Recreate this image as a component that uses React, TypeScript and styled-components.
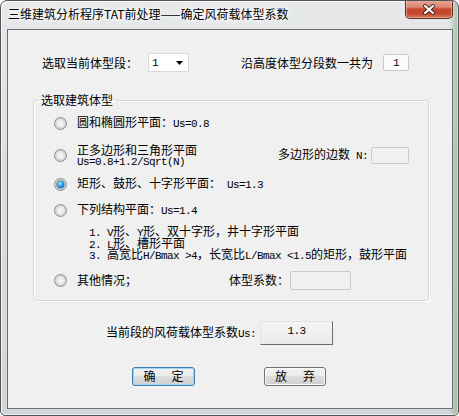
import React from "react";
import styled, { createGlobalStyle } from "styled-components";

const Global = createGlobalStyle`
  html, body { margin: 0; padding: 0; background: #ffffff; }
  body {
    width: 459px; height: 416px; overflow: hidden;
    font-family: "Noto Sans CJK SC", "Noto Sans", sans-serif;
    font-size: 12px; color: #000;
  }
`;

const Window = styled.div`
  width: 459px;
  height: 416px;
  box-sizing: border-box;
  display: flex;
  flex-direction: column;
  border: 1px solid #50565b;
  border-radius: 7px 7px 5px 5px;
  background:
    linear-gradient(to right, rgba(0,0,0,0) 0%, rgba(0,0,0,0) 98%, rgba(110,160,100,0.55) 100%),
    linear-gradient(to bottom, #e6e8ea 0%, #dcdfe1 40%, #d3d6d9 100%);
  box-shadow: inset 1px 1px 0 rgba(255,255,255,0.7), inset -1px -1px 0 rgba(255,255,255,0.5);
  overflow: hidden;
`;

const TitleBar = styled.div`
  height: 28px;
  display: flex;
  align-items: flex-start;
  justify-content: space-between;
  flex: none;
`;

const TitleText = styled.div`
  padding: 5px 0 0 7px;
  line-height: 16px;
  font-size: 12px;
  color: #000;
  text-shadow: 0 0 6px #fff, 0 0 10px #fff, 0 0 3px #fff;
  white-space: nowrap;
`;

const CloseButton = styled.div`
  width: 48px;
  height: 19px;
  margin-top: -1px;
  margin-right: 5px;
  box-sizing: border-box;
  border: 1px solid #5e2b26;
  border-top: none;
  border-radius: 0 0 5px 5px;
  background: linear-gradient(to bottom, #e9a99a 0%, #dc8571 40%, #c9472f 50%, #c3472e 75%, #d67a5b 100%);
  box-shadow: inset 0 0 0 1px rgba(255,220,210,0.45);
  display: flex;
  align-items: center;
  justify-content: center;
`;

const Client = styled.div`
  flex: 1;
  margin: 0 5px 6px 6px;
  border: 1px solid #6a6e72;
  background: #f0f0f0;
  display: flex;
  flex-direction: column;
  align-items: flex-start;
`;

const TopRow = styled.div`
  margin-top: 23px;
  padding-left: 34px;
  height: 19px;
  display: flex;
  align-items: center;
`;

const Label = styled.span<{ $ml?: number }>`
  line-height: 16px;
  white-space: pre;
  margin-left: ${(p) => p.$ml ?? 0}px;
`;

const Mono = styled.span<{ $ml?: number }>`
  font-family: "Liberation Mono", "DejaVu Sans Mono", monospace;
  font-size: 11px;
  letter-spacing: -0.6px;
  white-space: pre;
  margin-left: ${(p) => p.$ml ?? 0}px;
`;

const Combo = styled.div`
  margin-left: 10px;
  width: 41px;
  height: 19px;
  box-sizing: border-box;
  border: 1px solid #dadada;
  background: #fff;
  display: flex;
  align-items: center;
  justify-content: space-between;
  padding: 0 5px 0 3px;
`;

const Field = styled.div<{ $w: number; $h: number; $ml: number; $bg?: string }>`
  width: ${(p) => p.$w}px;
  height: ${(p) => p.$h}px;
  margin-left: ${(p) => p.$ml}px;
  box-sizing: border-box;
  border: 1px solid #c9cbcd;
  border-radius: 2px;
  background: ${(p) => p.$bg ?? "#f0f0f0"};
  display: flex;
  align-items: center;
  justify-content: center;
  flex: none;
`;

const Group = styled.fieldset`
  margin: 20px 0 0 25px;
  padding: 0 19px 10px 20px;
  width: 396px;
  box-sizing: border-box;
  border: 1px solid #d6d8da;
  border-radius: 3px;
  box-shadow: inset 1px 1px 0 #fff, 1px 1px 0 #fff;
  min-inline-size: 0;
`;

const Legend = styled.legend`
  margin-left: -15px;
  padding: 0 2px;
  line-height: 16px;
  font-size: 12px;
`;

const Row = styled.div<{ $mt: number; $h: number }>`
  margin-top: ${(p) => p.$mt}px;
  height: ${(p) => p.$h}px;
  display: flex;
  align-items: center;
`;

const Radio = styled.span<{ $on?: boolean }>`
  width: 13px;
  height: 13px;
  box-sizing: border-box;
  border-radius: 50%;
  border: 1px solid #8d9092;
  background: radial-gradient(circle at 50% 50%, #f6f6f6 0px, #f1f1f1 2.5px, #dedede 4px, #cfcfcf 5.5px);
  margin-right: 10px;
  flex: none;
  display: grid;
  place-items: center;
  &::after {
    content: "";
    display: ${(p) => (p.$on ? "block" : "none")};
    width: 7px;
    height: 7px;
    border-radius: 50%;
    background: radial-gradient(circle at 40% 35%, #b8ecff 0%, #3ea6e8 40%, #0f5fb0 85%);
    box-shadow: 0 0 0 0.5px #0c4f8c;
  }
`;

const TwoLine = styled.div`
  display: flex;
  flex-direction: column;
`;

const Line1 = styled.span`
  line-height: 14px;
`;

const Line2 = styled.span`
  line-height: 10px;
  font-family: "Liberation Mono", "DejaVu Sans Mono", monospace;
  font-size: 11px;
  letter-spacing: -0.6px;
  white-space: pre;
`;

const Spacer = styled.div`
  flex: 1;
`;

const List = styled.div`
  margin-top: 7px;
  padding-left: 35px;
  display: flex;
  flex-direction: column;
`;

const ListLine = styled.div`
  line-height: 11.5px;
  height: 11.5px;
  white-space: pre;
`;

const UsRow = styled.div`
  margin-top: 20px;
  padding-left: 98px;
  display: flex;
  align-items: center;
  height: 24px;
`;

const UsBox = styled.div`
  margin-left: 4px;
  width: 73px;
  height: 24px;
  box-sizing: border-box;
  border: 1px solid;
  border-color: #e2e2e2 #6b6b6b #6b6b6b #e2e2e2;
  background: linear-gradient(to bottom, #f5f5f5, #eaeaea);
  display: flex;
  justify-content: center;
  align-items: center;
  padding-bottom: 3px;
`;

const ButtonRow = styled.div`
  margin-top: 22px;
  padding-left: 124px;
  display: flex;
  gap: 69px;
`;

const Button = styled.div<{ $default?: boolean; $w: number }>`
  width: ${(p) => p.$w}px;
  height: 19px;
  box-sizing: border-box;
  border: 1px solid ${(p) => (p.$default ? "#3c7fb1" : "#707070")};
  border-radius: 3px;
  background: linear-gradient(to bottom, #f2f2f2 0%, #ebebeb 50%, #dddddd 50%, #cfcfcf 100%);
  box-shadow: inset 0 0 0 1px ${(p) => (p.$default ? "#9fd7f5" : "#fbfbfb")};
  display: flex;
  align-items: center;
  justify-content: center;
  line-height: 16px;
  letter-spacing: 2px;
  padding-left: 2px;
`;

const Arrow = () => (
  <svg width="7" height="4" viewBox="0 0 7 4">
    <path d="M0 0 H7 L3.5 4 Z" fill="#000" />
  </svg>
);

const CloseX = () => (
  <svg width="14" height="11" viewBox="0 0 14 11">
    <path d="M3 2 L11 9 M11 2 L3 9" stroke="#4a2620" strokeWidth="4" strokeLinecap="round" />
    <path d="M3 2 L11 9 M11 2 L3 9" stroke="#ffffff" strokeWidth="2.2" strokeLinecap="round" />
  </svg>
);

export default function App() {
  return (
    <>
      <Global />
      <Window>
        <TitleBar>
          <TitleText>三维建筑分析程序TAT前处理——确定风荷载体型系数</TitleText>
          <CloseButton>
            <CloseX />
          </CloseButton>
        </TitleBar>
        <Client>
          <TopRow>
            <Label>选取当前体型段：</Label>
            <Combo>
              <Mono>1</Mono>
              <Arrow />
            </Combo>
            <Label $ml={52}>沿高度体型分段数一共为</Label>
            <Field $w={26} $h={17} $ml={10} $bg="#fbfbfb">
              <Mono>1</Mono>
            </Field>
          </TopRow>

          <Group>
            <Legend>选取建筑体型</Legend>
            <Row $mt={7} $h={16}>
              <Radio />
              <Label>
                圆和椭圆形平面：<Mono>Us=0.8</Mono>
              </Label>
            </Row>
            <Row $mt={12} $h={24}>
              <Radio />
              <TwoLine>
                <Line1>正多边形和三角形平面</Line1>
                <Line2>Us=0.8+1.2/Sqrt(N)</Line2>
              </TwoLine>
              <Spacer />
              <Label>
                多边形的边数<Mono> N:</Mono>
              </Label>
              <Field $w={38} $h={17} $ml={3} />
            </Row>
            <Row $mt={9} $h={16}>
              <Radio $on />
              <Label>
                矩形、鼓形、十字形平面：<Mono $ml={6}>Us=1.3</Mono>
              </Label>
            </Row>
            <Row $mt={10} $h={16}>
              <Radio />
              <Label>
                下列结构平面：<Mono>Us=1.4</Mono>
              </Label>
            </Row>
            <List>
              <ListLine>
                <Mono>1. V</Mono>形、<Mono>Y</Mono>形、双十字形，井十字形平面
              </ListLine>
              <ListLine>
                <Mono>2. L</Mono>形、槽形平面
              </ListLine>
              <ListLine>
                <Mono>3. </Mono>高宽比<Mono>H/Bmax &gt;4</Mono>，长宽比<Mono>L/Bmax &lt;1.5</Mono>的矩形，鼓形平面
              </ListLine>
            </List>
            <Row $mt={11} $h={19}>
              <Radio />
              <Label>其他情况；</Label>
              <Label $ml={92}>体型系数：</Label>
              <Field $w={61} $h={19} $ml={1} />
            </Row>
          </Group>

          <UsRow>
            <Label>
              当前段的风荷载体型系数<Mono>Us:</Mono>
            </Label>
            <UsBox>
              <Mono>1.3</Mono>
            </UsBox>
          </UsRow>

          <ButtonRow>
            <Button $default $w={63}>确　定</Button>
            <Button $w={62}>放　弃</Button>
          </ButtonRow>
        </Client>
      </Window>
    </>
  );
}
